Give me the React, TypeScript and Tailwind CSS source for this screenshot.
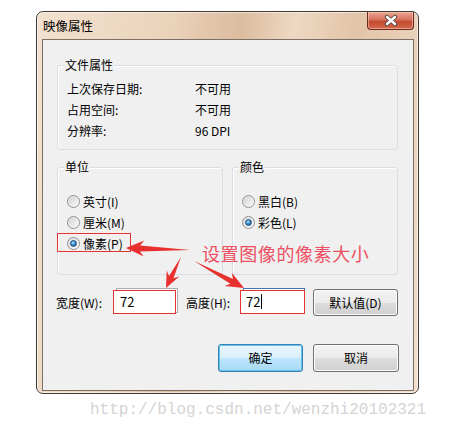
import React from "react";

type Pt = [number, number];

function arrowPoints(t: Pt, p: Pt, headLen: number, headHalf: number, shaftHalf: number): string {
  const dx = p[0] - t[0];
  const dy = p[1] - t[1];
  const len = Math.hypot(dx, dy);
  const ux = dx / len;
  const uy = dy / len;
  const nx = -uy;
  const ny = ux;
  const bx = p[0] - ux * headLen;
  const by = p[1] - uy * headLen;
  const sx = p[0] - ux * (headLen - 4);
  const sy = p[1] - uy * (headLen - 4);
  const pts: Pt[] = [
    t,
    [sx + nx * shaftHalf, sy + ny * shaftHalf],
    [bx + nx * headHalf, by + ny * headHalf],
    p,
    [bx - nx * headHalf, by - ny * headHalf],
    [sx - nx * shaftHalf, sy - ny * shaftHalf],
  ];
  return pts.map((q) => `${q[0].toFixed(1)},${q[1].toFixed(1)}`).join(" ");
}

function Radio({ checked }: { checked?: boolean }) {
  return (
    <div className="w-[13px] h-[13px] rounded-full border border-[#8c8f93] bg-[linear-gradient(135deg,#dcdcdc,#ffffff)] flex items-center justify-center shrink-0">
      {checked ? (
        <div className="w-[7px] h-[7px] rounded-full bg-[radial-gradient(circle_at_40%_35%,#bfe6fb_0%,#3a8fd4_45%,#10487f_100%)] border border-[#1d4f7c]" />
      ) : (
        <div className="w-[9px] h-[9px] rounded-full bg-[linear-gradient(135deg,#d2d4d6,#f7f7f7)]" />
      )}
    </div>
  );
}

function Group({
  title,
  className,
  children,
}: {
  title: string;
  className: string;
  children: React.ReactNode;
}) {
  return (
    <div className={`relative border border-[#d5dfe5] rounded-[3px] shadow-[inset_1px_1px_0_#ffffff] ${className}`}>
      <div className="absolute left-[6px] top-[-9px] px-[1px] bg-[#f0f0f0] leading-[16px] text-[12px] text-black">
        {title}
      </div>
      {children}
    </div>
  );
}

function RadioRow({ label, checked }: { label: string; checked?: boolean }) {
  return (
    <div className="h-[21px] flex items-center">
      <Radio checked={checked} />
      <span className="ml-[3px] text-[12px] leading-[16px] text-black">{label}</span>
    </div>
  );
}

export default function App() {
  return (
    <div className="relative w-[452px] h-[429px] bg-white overflow-hidden font-['Noto_Sans_CJK_SC','Noto_Sans',sans-serif] text-black">
      <div className="pt-[11px] pl-[36px]">
        {/* window */}
        <div className="w-[383px] h-[383px] rounded-[7px] border border-[#3f3a36] bg-[linear-gradient(100deg,#f2e1cf_0%,#ebd3bb_30%,#dbbc9f_46%,#eed8c3_58%,#e2c4a8_72%,#f1dfcd_100%)] shadow-[inset_0_0_0_1px_rgba(255,255,255,0.55)] flex flex-col pl-[5px] pr-[4px] pb-[2px]">
          {/* title bar */}
          <div className="h-[27px] flex items-start justify-between shrink-0">
            <div className="self-center pl-[1px] text-[12.5px] leading-[16px] text-black">映像属性</div>
            <div className="mr-[0px] w-[47px] h-[18px] rounded-b-[4px] border border-t-0 border-[#6b2a20] bg-[linear-gradient(180deg,#eaa491_0%,#d8735f_45%,#c44a30_55%,#d4684c_100%)] shadow-[inset_0_0_0_1px_rgba(255,220,200,0.5)] flex items-center justify-center">
              <svg width="14" height="11" viewBox="0 0 14 11">
                <path d="M3 2 L11 9 M11 2 L3 9" stroke="#4a4a4a" strokeWidth="4.2" strokeLinecap="round" />
                <path d="M3 2 L11 9 M11 2 L3 9" stroke="#ffffff" strokeWidth="2.4" strokeLinecap="round" />
              </svg>
            </div>
          </div>
          {/* client */}
          <div className="flex-1 border border-[#7d6f63] bg-[#f0f0f0] flex flex-col">
            {/* file properties */}
            <Group title="文件属性" className="mt-[25px] ml-[14px] mr-[15px] h-[85px] pt-[12px] pl-[9px]">
              {[
                ["上次保存日期:", "不可用"],
                ["占用空间:", "不可用"],
                ["分辨率:", "96 DPI"],
              ].map(([k, v]) => (
                <div key={k} className="h-[21px] flex items-center text-[12px] leading-[16px]">
                  <span className="w-[128px]">{k}</span>
                  <span>{v}</span>
                </div>
              ))}
            </Group>

            {/* units & colour */}
            <div className="mt-[17px] ml-[14px] mr-[15px] flex gap-[9px]">
              <Group title="单位" className="w-[166px] h-[108px] pt-[23px] pl-[9px]">
                <RadioRow label="英寸(I)" />
                <RadioRow label="厘米(M)" />
                <RadioRow label="像素(P)" checked />
                <div className="absolute left-[-1px] top-[65px] w-[74px] h-[19px] border border-[#e5342f]" />
              </Group>
              <Group title="颜色" className="w-[166px] h-[108px] pt-[23px] pl-[9px]">
                <RadioRow label="黑白(B)" />
                <RadioRow label="彩色(L)" checked />
              </Group>
            </div>

            {/* size row */}
            <div className="mt-[14px] pl-[13px] h-[27px] flex items-center text-[12px] leading-[16px]">
              <span className="w-[57px] pt-[1px]">宽度(W):</span>
              <div className="relative w-[63px] h-[24px] mt-[-2px]">
                <div className="absolute left-[3px] top-[-2px] w-[62px] h-[25px] border border-[#abadb3] bg-white" />
                <div className="absolute inset-0 border border-[#e5342f] bg-white flex items-center pl-[6px] text-[13px]">72</div>
              </div>
              <span className="ml-[10px] w-[54px] pt-[1px]">高度(H):</span>
              <div className="relative w-[65px] h-[24px] mt-[-2px]">
                <div className="absolute left-[3px] top-[-2px] w-[62px] h-[25px] border border-[#3d7bad] bg-white" />
                <div className="absolute inset-0 border border-[#e5342f] bg-white flex items-center pl-[5px] text-[13px]">
                  72<span className="ml-[1px] w-px h-[15px] bg-black" />
                </div>
              </div>
              <div className="ml-[8px] w-[85px] h-[27px] rounded-[3px] border border-[#707070] bg-[linear-gradient(180deg,#f2f2f2_0%,#ebebeb_50%,#dddddd_51%,#cfcfcf_100%)] shadow-[inset_0_0_0_1px_#fcfcfc] flex items-center justify-center text-[12px]">
                默认值(D)
              </div>
            </div>

            {/* OK / Cancel */}
            <div className="mt-[28px] pr-[14px] flex justify-end gap-[10px]">
              <div className="w-[85px] h-[28px] rounded-[3px] border border-[#3c7fb1] bg-[linear-gradient(180deg,#eaf6fd_0%,#d9f0fc_50%,#bee6fd_51%,#a7d9f5_100%)] shadow-[inset_0_0_0_1px_#5fc3ee] flex items-center justify-center text-[12px]">
                确定
              </div>
              <div className="w-[86px] h-[28px] rounded-[3px] border border-[#707070] bg-[linear-gradient(180deg,#f2f2f2_0%,#ebebeb_50%,#dddddd_51%,#cfcfcf_100%)] shadow-[inset_0_0_0_1px_#fcfcfc] flex items-center justify-center text-[12px]">
                取消
              </div>
            </div>
          </div>
        </div>
        {/* watermark */}
        <div className="mt-[7px] ml-[54px] h-[19px] leading-[19px] text-[16px] text-[#d4d4d4] font-['Liberation_Mono',monospace] whitespace-nowrap">
          http://blog.csdn.net/wenzhi20102321
        </div>
      </div>

      {/* annotation overlay */}
      <div className="absolute left-[202px] top-[241px] text-[18px] leading-[24px] tracking-[0.6px] text-[#ef4f62] whitespace-nowrap">
        设置图像的像素大小
      </div>
      <svg className="absolute left-0 top-0 pointer-events-none" width="452" height="429">
        <polygon points={arrowPoints([190, 250], [126, 248], 18, 8, 3)} fill="#e8302e" />
        <polygon points={arrowPoints([181, 257], [166, 288], 16, 7, 2.5)} fill="#e8302e" />
        <polygon points={arrowPoints([194, 261], [244, 288], 18, 7.5, 2.8)} fill="#e8302e" />
      </svg>
    </div>
  );
}
